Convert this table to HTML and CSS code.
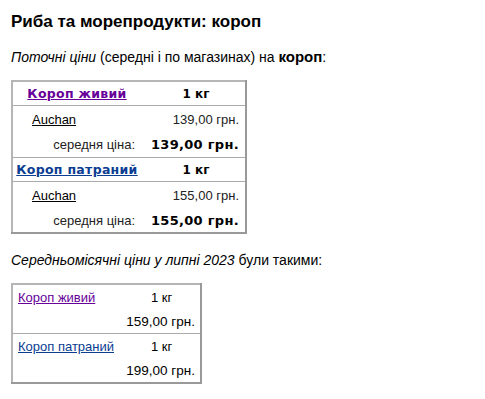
FILE: index.html
```html
<!DOCTYPE html>
<html lang="uk">
<head>
<meta charset="utf-8">
<title>Риба та морепродукти: короп</title>
<link rel="stylesheet" href="styles.css">
</head>
<body>
<main class="page">
  <h1 class="title">Риба та морепродукти: короп</h1>
  <p class="intro"><em>Поточні ціни</em> (середні і по магазинах) на <strong>короп</strong>:</p>

  <table class="current">
    <tbody>
      <tr class="product">
        <td class="name"><a class="visited" href="#">Короп живий</a></td>
        <td class="unit">1 кг</td>
      </tr>
      <tr class="shop">
        <td class="shop-name"><a href="#">Auchan</a></td>
        <td class="price">139,00 грн.</td>
      </tr>
      <tr class="avg">
        <td class="avg-label">середня ціна:</td>
        <td class="avg-price">139,00 грн.</td>
      </tr>
      <tr class="product">
        <td class="name"><a class="fresh" href="#">Короп патраний</a></td>
        <td class="unit">1 кг</td>
      </tr>
      <tr class="shop">
        <td class="shop-name"><a href="#">Auchan</a></td>
        <td class="price">155,00 грн.</td>
      </tr>
      <tr class="avg">
        <td class="avg-label">середня ціна:</td>
        <td class="avg-price">155,00 грн.</td>
      </tr>
    </tbody>
  </table>

  <p class="intro monthly"><em>Середньомісячні ціни у липні 2023</em> були такими:</p>

  <table class="history">
    <tbody>
      <tr class="h-name">
        <td class="h-title"><a class="visited" href="#">Короп живий</a></td>
        <td class="h-unit">1 кг</td>
      </tr>
      <tr class="h-price">
        <td></td>
        <td class="h-value">159,00 грн.</td>
      </tr>
      <tr class="h-name">
        <td class="h-title"><a class="fresh" href="#">Короп патраний</a></td>
        <td class="h-unit">1 кг</td>
      </tr>
      <tr class="h-price">
        <td></td>
        <td class="h-value">199,00 грн.</td>
      </tr>
    </tbody>
  </table>
</main>
</body>
</html>
```

FILE: styles.css
```css
html, body {
  margin: 0;
  padding: 0;
  background: #fff;
}

body {
  font-family: "Liberation Sans", Arial, sans-serif;
  color: #000;
}

.page {
  padding: 0 11px;
}

.title {
  margin: 0;
  padding-top: 12px;
  font-size: 17px;
  line-height: 20px;
  font-weight: bold;
}

.intro {
  margin: 0;
  padding-top: 16px;
  font-size: 14px;
  line-height: 17px;
}

.intro strong {
  font-size: 15px;
}

a {
  color: #000;
  text-decoration: underline;
}

a.visited {
  color: #660099;
}

a.fresh {
  color: #0b3d91;
}

/* current prices */
.current {
  margin-top: 14px;
  border-collapse: collapse;
  border-style: solid;
  border-width: 2px;
  border-color: #b5b5b5 #999 #999 #b5b5b5;
  width: 236px;
}

.current td {
  padding: 0;
  vertical-align: middle;
}

.current .product td {
  height: 23px;
  border-bottom: 1px solid #aaa;
}

.current .shop td {
  height: 26px;
}

.current .avg td {
  height: 25px;
  border-bottom: 1px solid #aaa;
}

.current tr:last-child td {
  border-bottom: none;
  height: 24px;
}

.current .name {
  text-align: center;
  width: 128px;
  font-family: "DejaVu Sans", Verdana, sans-serif;
  font-size: 12.5px;
  font-weight: bold;
  letter-spacing: 0.3px;
}

.current .unit {
  text-align: center;
  font-family: "DejaVu Sans", Verdana, sans-serif;
  font-size: 12px;
  font-weight: bold;
  padding-left: 6px;
}

.current .shop-name {
  padding-left: 19px;
  font-size: 13px;
}

.current .price {
  text-align: right;
  padding-right: 6px;
  font-size: 13px;
  color: #222;
}

.current .avg-label {
  text-align: right;
  font-size: 13px;
  color: #222;
  padding-right: 6px;
}

.current .avg-price {
  text-align: right;
  padding-right: 6px;
  font-family: "DejaVu Sans", Verdana, sans-serif;
  font-size: 13px;
  font-weight: bold;
  letter-spacing: 0.3px;
}

.monthly {
  padding-top: 18px;
}

/* monthly history */
.history {
  margin-top: 14px;
  border-collapse: collapse;
  border-style: solid;
  border-width: 2px;
  border-color: #b5b5b5 #999 #999 #b5b5b5;
  width: 191px;
  font-size: 13px;
}

.history td {
  padding: 0;
  vertical-align: middle;
}

.history .h-name td {
  height: 24px;
}

.history .h-price td {
  height: 24px;
  border-bottom: 1px solid #aaa;
}

.history tr:last-child td {
  border-bottom: none;
}

.history .h-title {
  padding-left: 5px;
  width: 108px;
}

.history .h-unit {
  padding-left: 25px;
}

.history .h-value {
  text-align: right;
  padding-right: 5px;
  font-size: 13.5px;
}
```
